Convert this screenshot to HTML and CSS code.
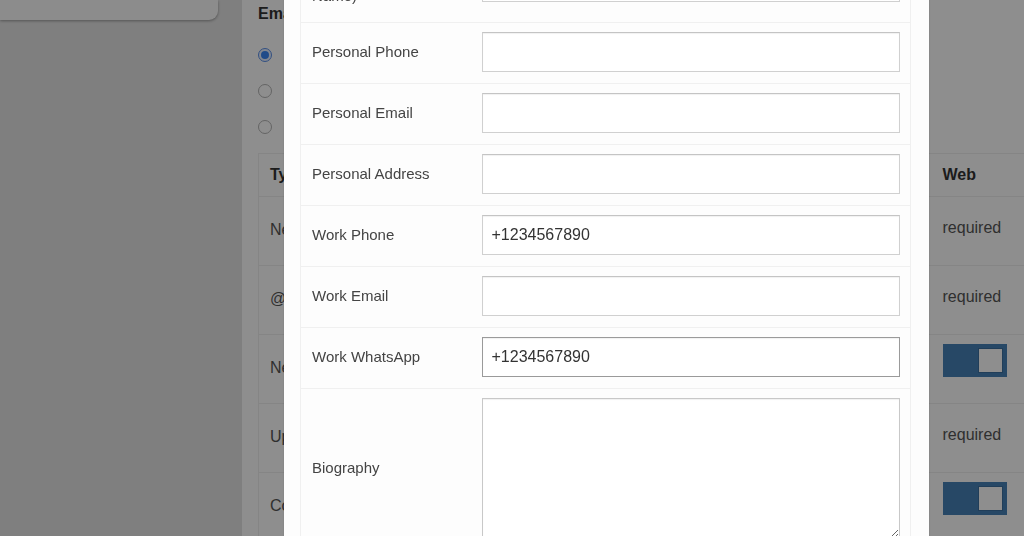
FILE: index.html
```html
<!DOCTYPE html>
<html lang="en">
<head>
<meta charset="utf-8">
<title>Profile</title>
<link rel="stylesheet" href="styles.css">
</head>
<body>
<div class="page">
  <aside class="sidebar">
    <div class="sidebar-card"></div>
  </aside>
  <main class="main">
    <h3 class="section-title">Email notifications</h3>
    <div class="radio-list">
      <label class="radio-option"><span class="radio checked"></span><span>Send immediately</span></label>
      <label class="radio-option"><span class="radio"></span><span>Daily digest</span></label>
      <label class="radio-option"><span class="radio"></span><span>Never</span></label>
    </div>
    <table class="notif-table">
      <colgroup><col class="c-type"><col class="c-mid"><col class="c-web"></colgroup>
      <thead>
        <tr><th>Type</th><th>Email</th><th>Web</th></tr>
      </thead>
      <tbody>
        <tr><td>New message</td><td>required</td><td>required</td></tr>
        <tr><td>@ mention</td><td>required</td><td>required</td></tr>
        <tr><td>New follower</td><td>optional</td><td class="cell-top"><span class="toggle"><span class="knob"></span></span></td></tr>
        <tr><td>Updates</td><td>required</td><td>required</td></tr>
        <tr><td>Comments</td><td>optional</td><td class="cell-top"><span class="toggle"><span class="knob"></span></span></td></tr>
      </tbody>
    </table>
  </main>
</div>

<div class="backdrop"></div>

<div class="modal">
  <table class="form-table">
    <colgroup><col class="c-label"><col></colgroup>
    <tbody>
      <tr class="first-row"><td class="label">Display (Nickname<br>Name)</td><td class="field"><input class="text-input" type="text"></td></tr>
      <tr><td class="label">Personal Phone</td><td class="field"><input class="text-input" type="text"></td></tr>
      <tr><td class="label">Personal Email</td><td class="field"><input class="text-input" type="text"></td></tr>
      <tr><td class="label">Personal Address</td><td class="field"><input class="text-input" type="text"></td></tr>
      <tr><td class="label">Work Phone</td><td class="field"><input class="text-input" type="text" value="+1234567890"></td></tr>
      <tr><td class="label">Work Email</td><td class="field"><input class="text-input" type="text"></td></tr>
      <tr><td class="label">Work WhatsApp</td><td class="field"><input class="text-input focused" type="text" value="+1234567890"></td></tr>
      <tr><td class="label">Biography</td><td class="field"><textarea class="text-area"></textarea></td></tr>
    </tbody>
  </table>
</div>
</body>
</html>
```
FILE: styles.css
```css
* { box-sizing: border-box; }
html, body { margin: 0; padding: 0; height: 100%; overflow: hidden; }
body {
  font-family: "Liberation Sans", Arial, sans-serif;
  color: #333;
  background: #fdfdfd;
}
.page {
  display: flex;
  height: 100%;
}
.sidebar {
  width: 242px;
  flex: 0 0 242px;
  background: #e3e3e3;
}
.sidebar-card {
  width: 218px;
  height: 20px;
  background: #fafafa;
  border-radius: 0 0 9px 0;
  box-shadow: 0 1px 3px rgba(0,0,0,0.35);
}
.main {
  flex: 1;
  background: #fdfdfd;
  padding: 4px 0 0 16px;
  overflow: hidden;
}
.section-title {
  margin: 0;
  font-size: 16px;
  line-height: 20px;
  font-weight: 700;
  color: #333;
}
.radio-list {
  margin-top: 13px;
  display: flex;
  flex-direction: column;
}
.radio-option {
  height: 36px;
  display: flex;
  align-items: center;
  gap: 22px;
  font-size: 16px;
  color: #555;
}
.radio {
  width: 14px;
  height: 14px;
  border-radius: 50%;
  border: 1px solid #b3b3b3;
  background: #fdfdfd;
  display: inline-flex;
  align-items: center;
  justify-content: center;
}
.radio.checked {
  border-color: #5a8fe8;
  background: #e9f1ff;
}
.radio.checked::after {
  content: "";
  width: 8px;
  height: 8px;
  border-radius: 50%;
  background: #3a86f4;
}
.notif-table {
  margin-top: 8px;
  width: 800px;
  border-collapse: collapse;
  table-layout: fixed;
  font-size: 16px;
}
.c-type { width: 200px; }
.c-mid { width: 473px; }
.c-web { width: 127px; }
.notif-table th {
  text-align: left;
  font-weight: 700;
  color: #333;
  height: 43px;
  padding: 0 12px 0 11px;
  border-top: 1px solid #ededed;
  border-bottom: 1px solid #ededed;
  vertical-align: middle;
}
.notif-table td {
  height: 69px;
  padding: 0 12px 6px 11px;
  border-bottom: 1px solid #ededed;
  vertical-align: middle;
  color: #555;
  white-space: nowrap;
}
.notif-table td:first-child { padding-bottom: 2px; }
.notif-table th:first-child,
.notif-table td:first-child { border-left: 1px solid #ededed; }
.notif-table td.cell-top {
  vertical-align: top;
  padding-top: 9px;
}
.toggle {
  display: flex;
  justify-content: flex-end;
  align-items: center;
  width: 64px;
  height: 33px;
  padding: 4px;
  background: #4781b6;
}
.knob {
  width: 25px;
  height: 25px;
  background: #fdfdfd;
  border: 1px solid #3b6f9f;
}

.backdrop {
  position: fixed;
  inset: 0;
  background: rgba(0,0,0,0.44);
  z-index: 10;
}
.modal {
  position: fixed;
  z-index: 20;
  left: 284px;
  top: -47px;
  width: 645px;
  height: 640px;
  background: #fdfdfd;
  padding: 0 18px 0 16px;
  box-shadow: 0 0 2px rgba(0,0,0,0.15);
}
.form-table {
  width: 100%;
  border-collapse: collapse;
  table-layout: fixed;
  border-left: 1px solid #f0f0f0;
  border-right: 1px solid #f0f0f0;
}
.c-label { width: 170px; }
.form-table td {
  border-bottom: 1px solid #f0f0f0;
}
.label {
  padding: 0 8px 4px 11px;
  font-size: 15px;
  line-height: 21px;
  color: #444;
  vertical-align: middle;
}
.first-row .label { padding-top: 11px; padding-bottom: 16px; }
.field {
  padding: 9px 10px 11px 11px;
  vertical-align: top;
}
.text-input,
.text-area {
  display: block;
  width: 100%;
  height: 40px;
  margin: 0;
  padding: 0 9px;
  border: 1px solid #d0d0d0;
  border-top-color: #c4c4c4;
  border-radius: 0;
  background: #fff;
  font-family: "Liberation Sans", Arial, sans-serif;
  font-size: 16px;
  color: #333;
  box-shadow: inset 0 1px 1px rgba(0,0,0,0.06);
  outline: none;
}
.text-input.focused {
  border-color: #9a9a9a;
}
.text-area {
  height: 141px;
  padding: 8px 9px;
  resize: vertical;
  border-color: #c8c8c8;
}
```
